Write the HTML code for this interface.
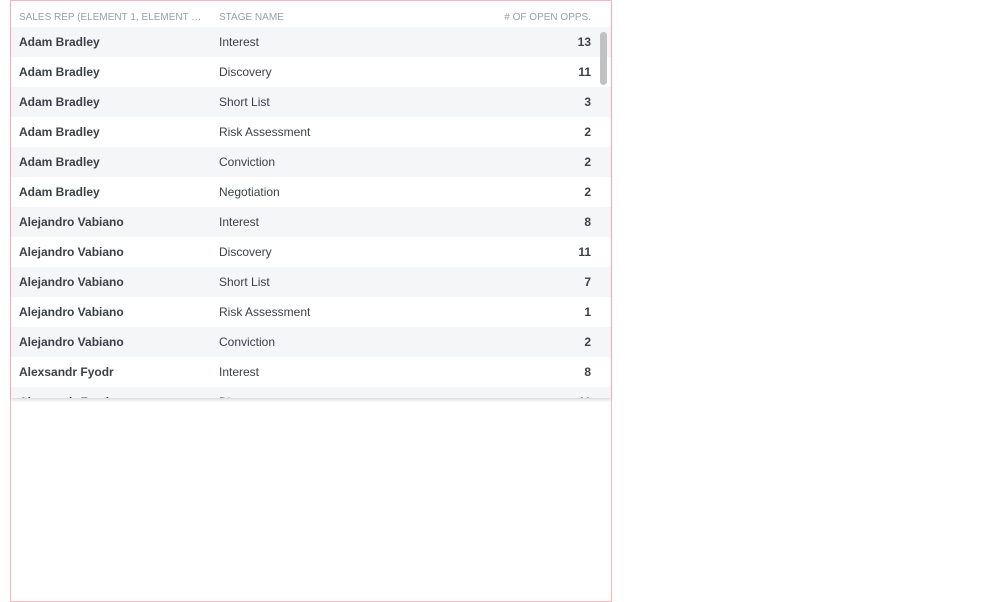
<!DOCTYPE html>
<html><head><style>
body{margin:0;background:#fff;font-family:"Liberation Sans",sans-serif;}
.box{position:absolute;left:10px;top:0;width:600px;height:600px;border:1px solid #ffb6c1;}
.clip{position:absolute;left:0;top:0;width:600px;height:397px;overflow:hidden;box-shadow:0 2px 3px rgba(0,0,0,.15);}
.hdr{height:26px;font-size:10px;color:#9aa0a8;position:relative;}
.hdr span{position:absolute;top:11px;}
.row{height:30px;position:relative;font-size:12px;color:#3c4048;}
.row:nth-child(odd){background:#f5f6f8;}
.row span{position:absolute;top:8px;}
.a{left:8px;font-weight:bold;}
.b{left:208px;}
.c{right:20px;font-weight:bold;}
.sb{position:absolute;left:589px;top:31px;width:7px;height:53px;background:#c1c1c1;border-radius:4px;}
</style></head><body>
<div class="box"><div class="clip">
<div class="hdr"><span style="left:8px">SALES REP (ELEMENT 1, ELEMENT …</span><span style="left:208px">STAGE NAME</span><span style="right:20px"># OF OPEN OPPS.</span></div>
<div>
<div class="row"><span class="a">Adam Bradley</span><span class="b">Interest</span><span class="c">13</span></div>
<div class="row"><span class="a">Adam Bradley</span><span class="b">Discovery</span><span class="c">11</span></div>
<div class="row"><span class="a">Adam Bradley</span><span class="b">Short List</span><span class="c">3</span></div>
<div class="row"><span class="a">Adam Bradley</span><span class="b">Risk Assessment</span><span class="c">2</span></div>
<div class="row"><span class="a">Adam Bradley</span><span class="b">Conviction</span><span class="c">2</span></div>
<div class="row"><span class="a">Adam Bradley</span><span class="b">Negotiation</span><span class="c">2</span></div>
<div class="row"><span class="a">Alejandro Vabiano</span><span class="b">Interest</span><span class="c">8</span></div>
<div class="row"><span class="a">Alejandro Vabiano</span><span class="b">Discovery</span><span class="c">11</span></div>
<div class="row"><span class="a">Alejandro Vabiano</span><span class="b">Short List</span><span class="c">7</span></div>
<div class="row"><span class="a">Alejandro Vabiano</span><span class="b">Risk Assessment</span><span class="c">1</span></div>
<div class="row"><span class="a">Alejandro Vabiano</span><span class="b">Conviction</span><span class="c">2</span></div>
<div class="row"><span class="a">Alexsandr Fyodr</span><span class="b">Interest</span><span class="c">8</span></div>
<div class="row"><span class="a">Alexsandr Fyodr</span><span class="b">Discovery</span><span class="c">11</span></div>
</div>
<div class="sb"></div>
</div></div>
</body></html>
